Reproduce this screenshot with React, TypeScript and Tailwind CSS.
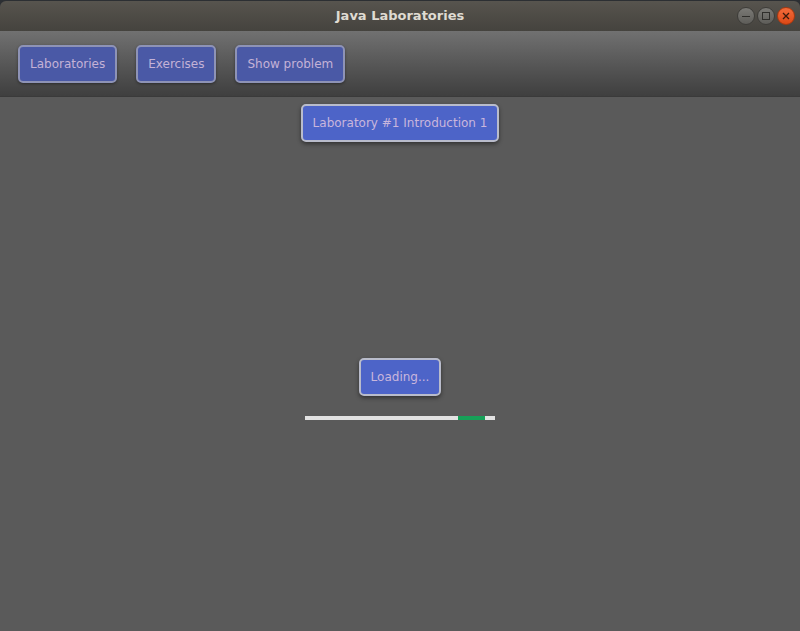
export default function App() {
  const toolbarBtn =
    "h-[38px] px-[10px] rounded-[5px] border-2 border-[#8e93b6] bg-[#4a59a6] text-[12px] text-[#c4b2d6] shadow-[0_1px_3px_rgba(0,0,0,0.4)]";
  const mainBtn =
    "h-[38px] px-[10px] rounded-[5px] border-2 border-[#b9bccb] bg-[#4d64c8] text-[12px] text-[#c9b6dc] shadow-[0_2px_4px_rgba(0,0,0,0.45)]";

  return (
    <div
      className="w-[800px] h-[631px] flex flex-col bg-[#2c2f33] overflow-hidden"
      style={{ fontFamily: '"DejaVu Sans", "Liberation Sans", sans-serif' }}
    >
      {/* title bar */}
      <div className="mt-[1px] h-[30px] shrink-0 rounded-t-[6px] bg-gradient-to-b from-[#57544e] to-[#45433e] flex items-center relative">
        <div className="flex-1 text-center text-[13px] font-bold text-[#dfdbd2]">
          Java Laboratories
        </div>
        <div className="absolute right-[5px] top-[6px] flex gap-[2px]">
          <div className="w-[18px] h-[18px] rounded-full bg-gradient-to-b from-[#7b7a76] to-[#5e5d59] border border-[#3d3c39] flex items-center justify-center">
            <div className="w-[8px] h-[1px] bg-[#2f2e2b]" />
          </div>
          <div className="w-[18px] h-[18px] rounded-full bg-gradient-to-b from-[#7b7a76] to-[#5e5d59] border border-[#3d3c39] flex items-center justify-center">
            <div className="w-[8px] h-[8px] border border-[#2f2e2b]" />
          </div>
          <div className="w-[18px] h-[18px] rounded-full bg-gradient-to-b from-[#f26b3a] to-[#dd4814] border border-[#a8380f] flex items-center justify-center">
            <svg width="8" height="8" viewBox="0 0 8 8">
              <path d="M1 1L7 7M7 1L1 7" stroke="#3a1a0c" strokeWidth="1.3" />
            </svg>
          </div>
        </div>
      </div>

      {/* toolbar */}
      <div className="h-[66px] shrink-0 bg-gradient-to-b from-[#717171] to-[#3f3f3f] flex items-center gap-[19px] px-[18px] border-b border-[#3a3a3a]">
        <button className={toolbarBtn}>Laboratories</button>
        <button className={toolbarBtn}>Exercises</button>
        <button className={toolbarBtn}>Show problem</button>
      </div>

      {/* content */}
      <div className="flex-1 bg-[#5a5a5a] flex flex-col items-center">
        <button className={`${mainBtn} mt-[7px]`}>Laboratory #1 Introduction 1</button>
        <button className={`${mainBtn} mt-[216px]`}>Loading...</button>
        <div className="mt-[20px] w-[190px] h-[4px] bg-[#e2e2e2] flex">
          <div className="w-[153px]" />
          <div className="w-[27px] bg-[#17a058]" />
        </div>
      </div>
    </div>
  );
}
